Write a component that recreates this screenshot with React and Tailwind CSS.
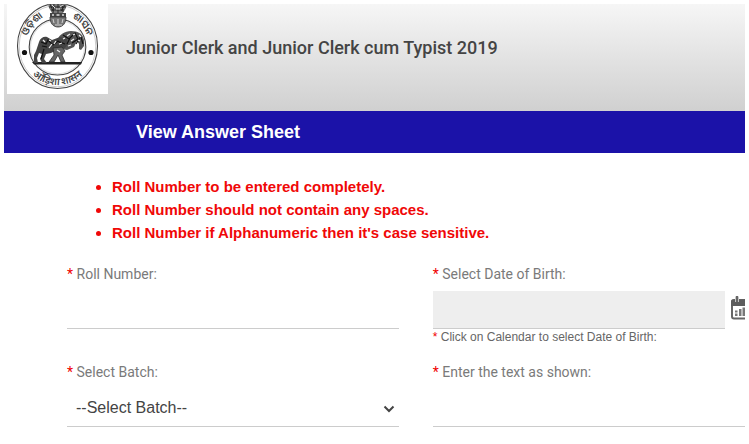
import React from 'react';

const Emblem = () => {
  return (
    <svg viewBox="0 0 101 90" className="w-[101px] h-[90px] bg-white" role="img" aria-label="Odisha emblem">
      <defs>
        <path id="ring-top" d="M19 42 A31.500 32 0 0 1 82 42" />
        <path id="ring-bottom" d="M13.500 44 A37 37 0 0 0 87.500 44" />
      </defs>
      <g fill="none" stroke="#444">
        <ellipse cx="50.500" cy="42" rx="40" ry="42.500" strokeWidth="1.100" />
        <ellipse cx="50.500" cy="42" rx="38.300" ry="40.800" strokeWidth="0.500" stroke="#999" />
        <ellipse cx="50.500" cy="43" rx="28.300" ry="28" strokeWidth="1.100" />
        <ellipse cx="50.500" cy="43" rx="27" ry="26.700" strokeWidth="0.400" stroke="#aaa" />
      </g>
      <circle cx="17.500" cy="48.500" r="2.600" fill="#111" />
      <circle cx="84" cy="48.500" r="2.600" fill="#111" />
      <g fontFamily='"Noto Sans Oriya", "Noto Sans Devanagari", "Noto Sans", sans-serif' fontSize="10" fontWeight="600" fill="#444">
        <text><textPath href="#ring-top" startOffset="10">ଓଡ଼ିଶା</textPath></text>
        <text textAnchor="end"><textPath href="#ring-top" startOffset="90%">ଶାସନ</textPath></text>
        <text textAnchor="middle"><textPath href="#ring-bottom" startOffset="50%">ओड़िशा शासन</textPath></text>
      </g>

      {/* lion capital */}
      <path d="M41 0h19l-1 4-3 5H45l-3-5z" fill="#777" />
      <path d="M43 0l3 7M47 0l-1 9M51 0v9M55 0l1 8M58 1l-4 6M42 3h17M44 6h13" stroke="#222" strokeWidth="0.900" />
      <path d="M45 1l3 3M53 3l3-2M49 5h4" stroke="#eee" strokeWidth="0.900" />
      <path d="M43 9h16v4H43z" fill="#444" />
      <path d="M45 11h2M49.500 11h3M55 11h2" stroke="#ddd" strokeWidth="1.500" />
      <path d="M43 13h16c0 6-3 10-8 10s-8-4-8-10z" fill="#777" stroke="#333" strokeWidth="0.800" />
      <path d="M46 15l1 4M51 15v5M56 15l-1 4M48 21h7" stroke="#ddd" strokeWidth="0.900" />

      {/* horse and warrior */}
      <path d="M25 58h50l-1 2.500H27z" fill="#222" />
      <path d="M51 35c1-4 7-8 13-8 7 0 12 3 13 9v6l-3 4-2-1v-5l-2-3-3 6-7 3-5-1-3-4c-2 0-2-4-1-7z" fill="#555" />
      <path d="M32 38c1-4 5-6 8-5l5 3 8-3 7 2 1 5-3 4-8 2-6 3-5 1-2 5 3 4h-5l-2-4 2-5-3-1-2 5 1 5h-4v-8l2-4z" fill="#444" />
      <path d="M46 44l9-1 3 4-3 4 3 7h-4l-3-7-4 7h-5l5-7z" fill="#666" stroke="#222" strokeWidth="0.700" />
      <path d="M56 31l6 4 6-6 3 6-6 4M60 40l3-6M69 40l5-8M74 33l2 7" fill="none" stroke="#111" strokeWidth="1.200" />
      <path d="M34 38l5 2 2-4 5 5 5-4 4 3M35 42l5 1M37 45l-3 10M53 38l5 2" fill="none" stroke="#111" strokeWidth="1.200" />
      <path d="M36 36l2 2M42 36l2 1M45 40l-3 4M49 37l-2 3M52 40l3-1M56 35l2-1M60 32l3-2M66 31l2-1M64 37l3-2M61 42l3-1M72 31l2 2M71 36l2 1M50 46l3 2" stroke="#eee" strokeWidth="1.200" />
    </svg>
  );
};

const CalendarIcon = () => {
  return (
    <svg viewBox="0 0 22 24" className="w-[22px] h-6" aria-hidden="true">
      <rect x="1" y="4" width="20" height="18.500" rx="2" fill="#fff" stroke="#666" strokeWidth="2" />
      <path d="M0 10V5.500a2 2 0 0 1 2-2h18a2 2 0 0 1 2 2V10z" fill="#5c5c5c" />
      <path d="M6 1v5M16 1v5" stroke="#ddd" strokeWidth="4" />
      <path d="M6 0v6M16 0v6" stroke="#666" strokeWidth="2.400" />
      <path d="M4 14.500h2.500v2H4zM4 17.500h2.500v2.500H4zM8 13h2.500v7H8zM11.500 11.500H14V20h-2.500zM15.500 11.500H18V20h-2.500z" fill="#777" />
    </svg>
  );
};

const Label = ({ htmlFor, children }) => {
  return (
    <label htmlFor={htmlFor} className="block h-[27px] leading-5 text-sm text-[#7a7a7a]">
      <span className="text-[#f00000]">*</span> {children}
    </label>
  );
};

const App = () => {
  return (
    <div className="p-1 bg-white overflow-hidden font-['Roboto',sans-serif]">
      <header className="flex items-start gap-[18px] h-[107px] pl-[3px] bg-gradient-to-b from-[#f6f6f6] to-[#d0d0d0]">
        <Emblem />
        <h1 className="mt-8 text-lg leading-6 font-medium text-[#444]">
          Junior Clerk and Junior Clerk cum Typist 2019
        </h1>
      </header>

      <div className="h-[42px] pl-[132px] bg-[#1b12a8] text-white">
        <h2 className="text-lg leading-[42px] font-bold font-['Liberation_Sans',sans-serif]">View Answer Sheet</h2>
      </div>

      <ul className="mt-[22px] pl-[108px] list-disc font-['Liberation_Sans',sans-serif] text-[15px] leading-[23px] font-bold text-[#f00808]">
        <li>Roll Number to be entered completely.</li>
        <li>Roll Number should not contain any spaces.</li>
        <li>Roll Number if Alphanumeric then it's case sensitive.</li>
      </ul>

      <form className="grid grid-cols-[17fr_16fr] gap-x-[34px] mt-5 pl-[63px]">
        <div className="h-[98px]">
          <Label htmlFor="roll">Roll Number:</Label>
          <input id="roll" type="text" className="block w-full h-[38px] px-2 border-b border-[#ccc] outline-none" />
        </div>

        <div className="h-[98px]">
          <Label htmlFor="dob">Select Date of Birth:</Label>
          <div className="flex items-start gap-[6px] overflow-hidden">
            <input id="dob" type="text" readOnly className="flex-1 min-w-0 h-[38px] px-2 bg-[#eee] border-b border-[#ccc] outline-none" />
            <button type="button" aria-label="Open calendar" className="w-[14px] mt-[5px] overflow-hidden">
              <CalendarIcon />
            </button>
          </div>
          <p className="font-['Liberation_Sans',sans-serif] text-xs leading-4 text-[#666]">
            <span className="text-[#f00000]">*</span> Click on Calendar to select Date of Birth:
          </p>
        </div>

        <div>
          <Label htmlFor="batch">Select Batch:</Label>
          <div className="relative">
            <select id="batch" className="appearance-none w-full h-[38px] px-[9px] border-b border-[#ccc] font-['Liberation_Sans',sans-serif] text-base text-[#444] outline-none">
              <option>--Select Batch--</option>
            </select>
            <svg viewBox="0 0 12 8" className="absolute right-1 top-4 w-3 h-2 pointer-events-none" aria-hidden="true">
              <path d="M1.500 1.500 6 6l4.500-4.500" fill="none" stroke="#444" strokeWidth="2" />
            </svg>
          </div>
        </div>

        <div>
          <Label htmlFor="captcha">Enter the text as shown:</Label>
          <input id="captcha" type="text" className="block w-full h-[38px] px-2 border-b border-[#ccc] outline-none" />
        </div>
      </form>
    </div>
  );
};

export default App;
